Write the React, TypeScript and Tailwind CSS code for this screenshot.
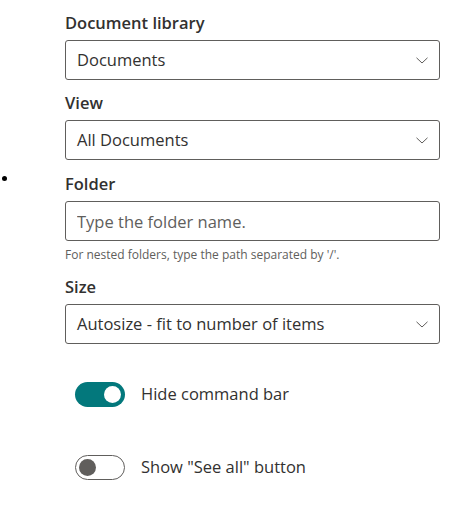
import { useState } from "react";

const FONT = "font-['Open_Sans',sans-serif]";

function Chevron() {
  return (
    <svg width="12" height="7" viewBox="0 0 12 7" fill="none" className="shrink-0">
      <path d="M0.5 0.8 L6 6 L11.5 0.8" stroke="#605e5c" strokeWidth="1" />
    </svg>
  );
}

function Dropdown({ value }: { value: string }) {
  return (
    <div className="flex h-[40px] items-center justify-between rounded-[3px] border border-[#605e5c] bg-white pl-[11px] pr-[11px]">
      <span className="text-[16.5px] text-[#323130]">{value}</span>
      <Chevron />
    </div>
  );
}

function Label({ children }: { children: React.ReactNode }) {
  return (
    <div className="h-[25px] text-[16.5px] leading-[25px] font-semibold text-[#323130]">
      {children}
    </div>
  );
}

function Toggle({ on, label }: { on: boolean; label: string }) {
  return (
    <div className="ml-[10px] flex items-center gap-[16px]">
      {on ? (
        <div className="flex h-[25px] w-[50px] items-center justify-end rounded-full bg-[#03787c] pr-[4px]">
          <div className="h-[17px] w-[17px] rounded-full bg-white" />
        </div>
      ) : (
        <div className="flex h-[25px] w-[50px] items-center justify-start rounded-full border border-[#605e5c] bg-white pl-[3px]">
          <div className="h-[17px] w-[17px] rounded-full bg-[#605e5c]" />
        </div>
      )}
      <span className="text-[16.5px] text-[#323130]">{label}</span>
    </div>
  );
}

export default function App() {
  const [folder, setFolder] = useState("");

  return (
    <div className={`${FONT} h-[510px] w-[453px] bg-white`}>
      <div className="flex pt-[10px]">
        <div className="w-[65px]" />
        <div className="w-[375px]">
          <Label>Document library</Label>
          <div className="mt-[5px]">
            <Dropdown value="Documents" />
          </div>

          <div className="mt-[10px]">
            <Label>View</Label>
          </div>
          <div className="mt-[5px]">
            <Dropdown value="All Documents" />
          </div>
        </div>
      </div>

      {/* Folder */}
      <div className="mt-[11px] flex">
        <div className="w-[65px] pl-[2px] pt-[5px]">
          <div className="h-[5px] w-[5px] rounded-full bg-black" />
        </div>
        <div className="w-[375px]">
          <Label>Folder</Label>
          <input
            value={folder}
            onChange={(e) => setFolder(e.target.value)}
            placeholder="Type the folder name."
            className="mt-[5px] block h-[40px] w-full rounded-[3px] border border-[#605e5c] px-[11px] text-[16.5px] text-[#323130] outline-none placeholder:text-[#605e5c]"
          />
          <div className="mt-[5px] text-[12px] leading-[18px] text-[#605e5c]">
            For nested folders, type the path separated by '/'.
          </div>

          <div className="mt-[10px]">
            <Label>Size</Label>
          </div>
          <div className="mt-[5px]">
            <Dropdown value="Autosize - fit to number of items" />
          </div>
        </div>
      </div>

      <div className="mt-[38px] pl-[65px]">
        <Toggle on label="Hide command bar" />
        <div className="mt-[48px]">
          <Toggle on={false} label={'Show "See all" button'} />
        </div>
      </div>
    </div>
  );
}
